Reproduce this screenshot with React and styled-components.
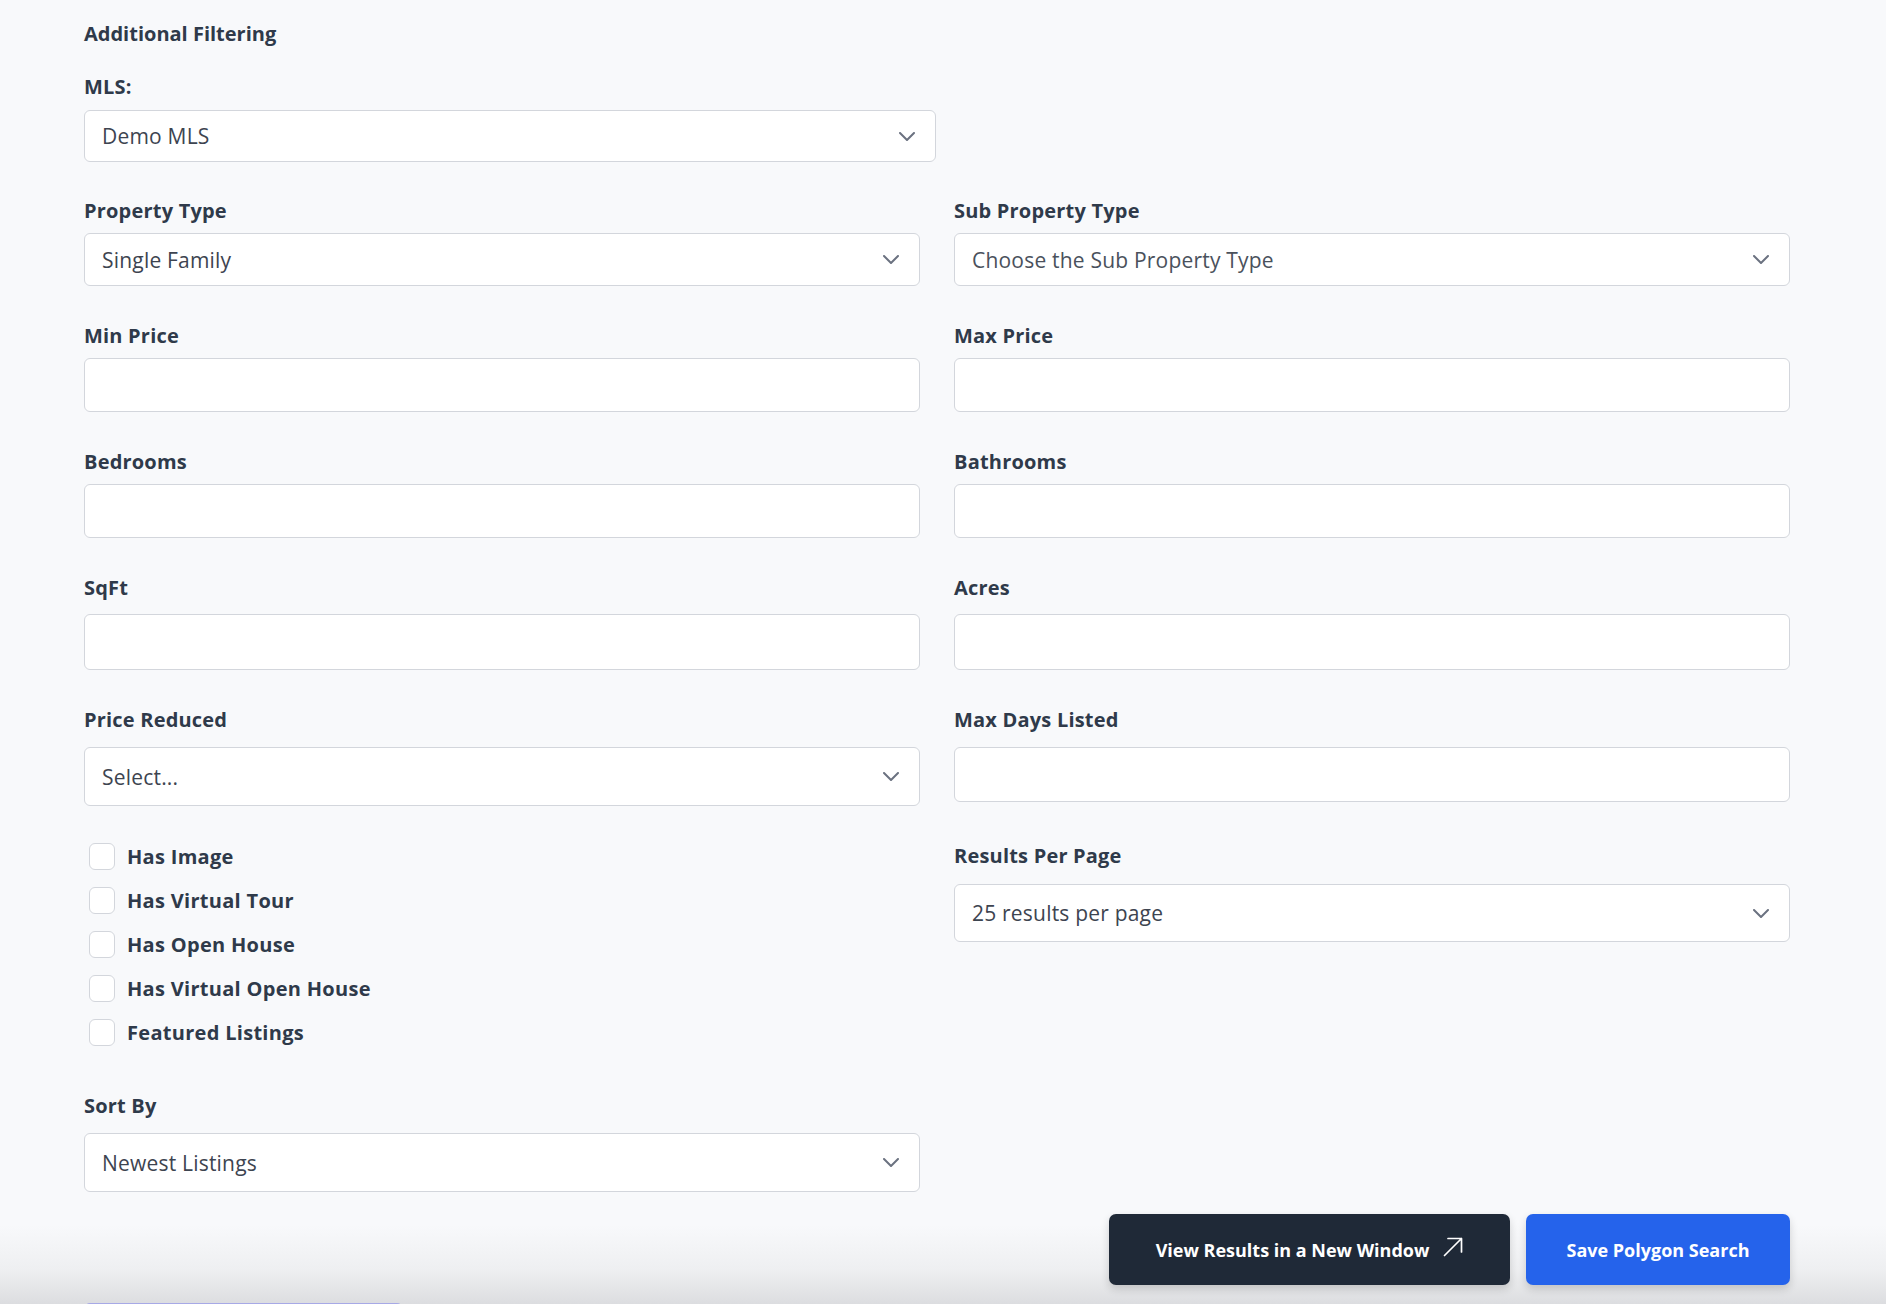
import React from 'react'
import styled, { createGlobalStyle } from 'styled-components'

const GlobalStyle = createGlobalStyle`
  html, body {
    margin: 0;
    padding: 0;
    height: 1304px;
    overflow: hidden;
    background: #f8f9fb;
  }
  * {
    box-sizing: border-box;
  }
`

const Page = styled.div`
  height: 1304px;
  overflow: hidden;
  padding: 21px 96px 0 84px;
  font-family: 'Open Sans', Lato, sans-serif;
  color: #2f3a4a;
  background: linear-gradient(
    to bottom,
    #f8f9fb 0,
    #f8f9fb 1225px,
    #eeeff1 1270px,
    #dcdde0 1304px
  );
`

const Title = styled.h2`
  margin: 0 0 27px;
  font-size: 20px;
  line-height: 26px;
  font-weight: 700;
  color: #2f3a4a;
`

const Field = styled.div`
  display: flex;
  flex-direction: column;
  width: ${props => props.width || 'auto'};
`

const Label = styled.label`
  display: block;
  font-size: 20px;
  line-height: 26px;
  font-weight: 700;
  letter-spacing: 0.2px;
  color: #2f3a4a;
  margin-bottom: ${props => props.gap || 9}px;
`

const Box = styled.div`
  position: relative;
  display: flex;
  align-items: center;
  height: ${props => props.h || 54}px;
  padding: 0 16px 0 17px;
  background: #fff;
  border: 1px solid #d3d6dc;
  border-radius: 6px;
  font-size: 21px;
  letter-spacing: 0.2px;
  color: #3d4450;
`

const Value = styled.span`
  flex: 1;
  white-space: nowrap;
  color: ${props => (props.muted ? '#4a515c' : '#3d4450')};
`

const Chevron = styled.svg`
  width: 16px;
  height: 9px;
  margin-right: 4px;
  flex-shrink: 0;
`

const Grid = styled.div`
  display: grid;
  grid-template-columns: 836px 836px;
  column-gap: 34px;
  row-gap: 37px;
  margin-top: 36px;
`

const CheckList = styled.div`
  display: flex;
  flex-direction: column;
  gap: 17px;
  padding-left: 5px;
`

const CheckRow = styled.label`
  display: flex;
  align-items: center;
  gap: 12px;
  height: 27px;
  font-size: 20px;
  font-weight: 700;
  letter-spacing: 0.3px;
  color: #2f3a4a;
`

const CheckBox = styled.span`
  width: 26px;
  height: 27px;
  background: #fff;
  border: 1px solid #d3d6dc;
  border-radius: 6px;
  flex-shrink: 0;
`

const SortField = styled(Field)`
  margin-top: 47px;
  width: 836px;
`

const Actions = styled.div`
  display: flex;
  justify-content: flex-end;
  gap: 16px;
  margin-top: 22px;
`

const Button = styled.button`
  display: flex;
  align-items: center;
  justify-content: center;
  gap: 14px;
  height: 71px;
  width: ${props => props.w}px;
  border: none;
  border-radius: 7px;
  background: ${props => (props.primary ? '#2563eb' : '#1f2937')};
  color: #fff;
  font-family: 'Open Sans', Lato, sans-serif;
  font-size: 18px;
  font-weight: 700;
  box-shadow: 0 4px 8px rgba(0, 0, 0, 0.16);
  cursor: pointer;
`

const Arrow = styled.svg`
  width: 20px;
  height: 20px;
  margin-top: -6px;
`

const Footer = styled.div`
  margin-top: 18px;
  width: 319px;
  height: 12px;
  border-radius: 6px 6px 0 0;
  background: #a7a9e6;
`

const ChevronDown = () => (
  <Chevron viewBox="0 0 16 9" fill="none">
    <path
      d="M1 1l7 7 7-7"
      stroke="#6b7280"
      strokeWidth="2"
      strokeLinecap="round"
      strokeLinejoin="round"
    />
  </Chevron>
)

const ExternalArrow = () => (
  <Arrow viewBox="0 0 20 20" fill="none">
    <path
      d="M1.5 18.5L18.5 1.5M5 1.5h13.5V15"
      stroke="#fff"
      strokeWidth="1.7"
      strokeLinecap="round"
      strokeLinejoin="round"
    />
  </Arrow>
)

const Select = ({ value, h, muted }) => (
  <Box h={h}>
    <Value muted={muted}>{value}</Value>
    <ChevronDown />
  </Box>
)

const checks = [
  'Has Image',
  'Has Virtual Tour',
  'Has Open House',
  'Has Virtual Open House',
  'Featured Listings'
]

export default function App() {
  return (
    <Page>
      <GlobalStyle />
      <Title>Additional Filtering</Title>

      <Field width="852px">
        <Label gap={10}>MLS:</Label>
        <Select value="Demo MLS" h={52} />
      </Field>

      <Grid>
        <Field>
          <Label>Property Type</Label>
          <Select value="Single Family" h={53} />
        </Field>
        <Field>
          <Label>Sub Property Type</Label>
          <Select value="Choose the Sub Property Type" h={53} muted />
        </Field>

        <Field>
          <Label>Min Price</Label>
          <Box h={54} />
        </Field>
        <Field>
          <Label>Max Price</Label>
          <Box h={54} />
        </Field>

        <Field>
          <Label>Bedrooms</Label>
          <Box h={54} />
        </Field>
        <Field>
          <Label>Bathrooms</Label>
          <Box h={54} />
        </Field>

        <Field>
          <Label gap={13}>SqFt</Label>
          <Box h={56} />
        </Field>
        <Field>
          <Label gap={13}>Acres</Label>
          <Box h={56} />
        </Field>

        <Field>
          <Label gap={14}>Price Reduced</Label>
          <Select value="Select..." h={59} />
        </Field>
        <Field>
          <Label gap={14}>Max Days Listed</Label>
          <Box h={55} />
        </Field>

        <CheckList>
          {checks.map(c => (
            <CheckRow key={c}>
              <CheckBox />
              {c}
            </CheckRow>
          ))}
        </CheckList>
        <Field>
          <Label gap={15}>Results Per Page</Label>
          <Select value="25 results per page" h={58} />
        </Field>
      </Grid>

      <SortField>
        <Label gap={14}>Sort By</Label>
        <Select value="Newest Listings" h={59} />
      </SortField>

      <Actions>
        <Button w={401}>
          View Results in a New Window
          <ExternalArrow />
        </Button>
        <Button w={264} primary>
          Save Polygon Search
        </Button>
      </Actions>

      <Footer />
    </Page>
  )
}
